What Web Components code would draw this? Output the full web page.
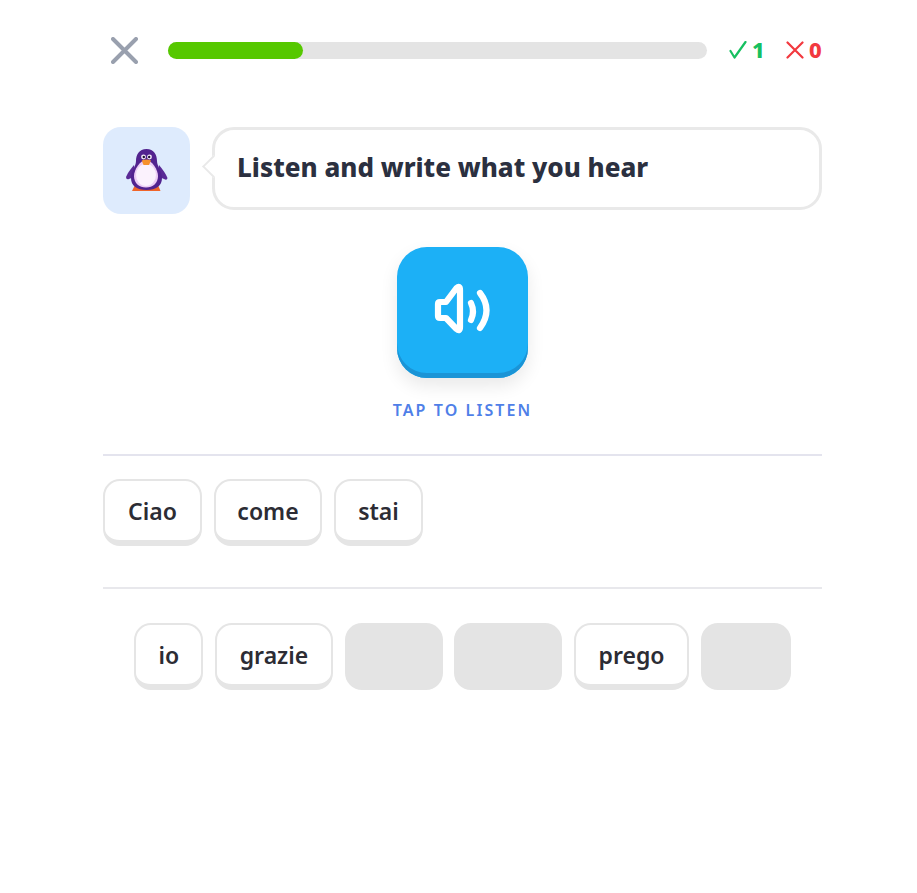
<!DOCTYPE html>
<html lang="en">
<head>
<meta charset="utf-8">
<title>Listen and write</title>
<style>
  html, body { margin: 0; background: #fff; }
  body { font-family: "Noto Sans", "Open Sans", sans-serif; color: #2b2f3a; }
</style>
</head>
<body>
<lesson-page>
  <lesson-header slot="header" progress="25" correct="1" wrong="0"></lesson-header>
  <lesson-prompt slot="prompt">Listen and write what you hear</lesson-prompt>
  <listen-button slot="listen">TAP TO LISTEN</listen-button>
  <answer-row slot="answer">
    <word-chip width="99">Ciao</word-chip>
    <word-chip width="108">come</word-chip>
    <word-chip width="89">stai</word-chip>
  </answer-row>
  <word-bank slot="bank">
    <word-chip width="69">io</word-chip>
    <word-chip width="118">grazie</word-chip>
    <word-chip width="98" used></word-chip>
    <word-chip width="108" used></word-chip>
    <word-chip width="115">prego</word-chip>
    <word-chip width="90" used></word-chip>
  </word-bank>
</lesson-page>

<script>
class LessonPage extends HTMLElement {
  constructor() {
    super();
    this.attachShadow({ mode: "open" });
    this.shadowRoot.innerHTML = `
<style>
:host { display: block; width: 719px; height: 856px; padding: 37px 95px 0 103px; }
.top { display: block; margin-bottom: 63px; }
.prompt { display: block; margin-bottom: 33px; }
.listen { display: block; margin-bottom: 34px; }
.answer { display: block; border-top: 2px solid #e4e4ee; border-bottom: 2px solid #e8e8ec; padding: 23px 0 41px; margin-bottom: 33px; }
</style>
<div class="top"><slot name="header"></slot></div>
<div class="prompt"><slot name="prompt"></slot></div>
<div class="listen"><slot name="listen"></slot></div>
<div class="answer"><slot name="answer"></slot></div>
<div class="bank"><slot name="bank"></slot></div>
`;
  }
}

class LessonHeader extends HTMLElement {
  constructor() {
    super();
    this.attachShadow({ mode: "open" });
    const progress = this.getAttribute("progress") || 0;
    this.shadowRoot.innerHTML = `
<style>
:host { display: flex; align-items: center; height: 27px; padding-left: 8px; }
.close { width: 27px; height: 27px; flex: none; margin-right: 30px; }
.bar { flex: none; width: 539px; height: 17px; background: #e4e4e4; border-radius: 9px; margin-right: 22px; }
.fill { height: 100%; width: ${progress}%; background: #56c800; border-radius: 9px; }
.score { display: flex; align-items: center; font-size: 22px; font-weight: 800; line-height: 27px; margin-top: -2px; }
.score svg { width: 18px; height: 18px; flex: none; margin-right: 5px; }
.ok { color: #16c060; width: 57px; }
.bad { color: #f2393f; }
</style>
<svg class="close" viewBox="0 0 27 27"><path d="M2 2 25 25M25 2 2 25" stroke="#99a0ae" stroke-width="4" stroke-linecap="round"/></svg>
<div class="bar"><div class="fill"></div></div>
<div class="score ok"><svg viewBox="0 0 18 18"><path d="M1.5 10 5.5 16.5 16.5 1" fill="none" stroke="#16c060" stroke-width="2.2" stroke-linecap="round" stroke-linejoin="round"/></svg><span>${this.getAttribute("correct")}</span></div>
<div class="score bad"><svg viewBox="0 0 18 18"><path d="M1.5 1.5 16.5 16.5M16.5 1.5 1.5 16.5" fill="none" stroke="#f2393f" stroke-width="2.2" stroke-linecap="round"/></svg><span>${this.getAttribute("wrong")}</span></div>
`;
  }
}

class LessonPrompt extends HTMLElement {
  constructor() {
    super();
    this.attachShadow({ mode: "open" });
    this.shadowRoot.innerHTML = `
<style>
:host { display: flex; align-items: flex-start; }
.avatar { width: 87px; height: 87px; flex: none; background: #deebfd; border-radius: 18px; display: flex; align-items: center; justify-content: center; margin-right: 22px; }
.avatar svg { width: 45px; height: 45px; }
.bubble { position: relative; flex: 1; box-sizing: border-box; height: 83px; border: 3px solid #e9e9e9; border-radius: 22px; background: #fff; display: flex; align-items: center; padding: 0 0 3px 22px; font-size: 26px; font-weight: 800; color: #2b3040; }
.bubble::before { content: ""; position: absolute; left: -10px; top: 28px; width: 15px; height: 15px; background: #fff; border-left: 2px solid #e9e9e9; border-bottom: 2px solid #e9e9e9; transform: rotate(45deg) scale(.95); }
</style>
<div class="avatar">
  <svg viewBox="0 0 45 45">
    <path d="M10 17 Q4 24 2 29 Q2 32 5 31 L12 28 Z" fill="#5a2a96"/>
    <path d="M35 17 Q41 24 43.5 30 Q43 33 40 31 L33 28 Z" fill="#5a2a96"/>
    <path d="M11 37 H34 L36.5 43 H8 Z" fill="#f0652a"/>
    <path d="M22.5 1 C15 1 12 7 12 13 C12 18 7 24 7 30 C7 38 13 42 22.5 42 C32 42 38 38 38 30 C38 24 33 18 33 13 C33 7 30 1 22.5 1Z" fill="#52238f"/>
    <path d="M22 12 C16 12 10 22 10 28 C10 35 15 39.5 22 39.5 C29 39.5 34 35 34 28 C34 22 28 12 22 12Z" fill="#eccdf5"/>
    <ellipse cx="22" cy="27" rx="10" ry="11" fill="#fbf2fd"/>
    <circle cx="19.5" cy="9" r="2.4" fill="#f7eefa"/>
    <circle cx="25.5" cy="9" r="2.4" fill="#f7eefa"/>
    <circle cx="19.8" cy="9" r="1.2" fill="#1d1030"/>
    <circle cx="25.2" cy="9" r="1.2" fill="#1d1030"/>
    <path d="M17.7 12.5 Q22.4 10.5 27 12.5 L25 17 H19.5 Z" fill="#f6912c"/>
  </svg>
</div>
<div class="bubble"><slot></slot></div>
`;
  }
}

class ListenButton extends HTMLElement {
  constructor() {
    super();
    this.attachShadow({ mode: "open" });
    this.shadowRoot.innerHTML = `
<style>
:host { display: flex; flex-direction: column; align-items: center; }
.btn { width: 131px; height: 131px; box-sizing: border-box; border-radius: 30px; background: #1cb0f6; box-shadow: inset 0 -5px 0 #1a94d6, 0 8px 18px rgba(0,0,0,.09); display: flex; align-items: center; justify-content: center; }
.btn svg { width: 60px; height: 56px; margin-top: -5px; }
.label { margin-top: 22px; font-size: 16px; line-height: 20px; font-weight: 600; letter-spacing: 2.1px; color: #4f7fe8; }
</style>
<div class="btn">
  <svg viewBox="0 0 60 56" fill="none" stroke="#fff" stroke-width="6.2" stroke-linecap="round" stroke-linejoin="round">
    <path d="M7 20 H13 L23.5 6 Q27 3 27 8 V45 Q27 50 23.5 47 L13 36 H7 Q5 36 5 34 V22 Q5 20 7 20 Z"/>
    <path d="M38 21 Q42 29.5 38 38"/>
    <path d="M47 11 Q60 28 47 46"/>
  </svg>
</div>
<div class="label"><slot></slot></div>
`;
  }
}

class AnswerRow extends HTMLElement {
  constructor() {
    super();
    this.attachShadow({ mode: "open" });
    this.shadowRoot.innerHTML = `
<style>:host { display: flex; gap: 12px; }</style>
<slot></slot>
`;
  }
}

class WordBank extends HTMLElement {
  constructor() {
    super();
    this.attachShadow({ mode: "open" });
    this.shadowRoot.innerHTML = `
<style>:host { display: flex; justify-content: center; gap: 11.7px; padding-top: 1px; }</style>
<slot></slot>
`;
  }
}

class WordChip extends HTMLElement {
  constructor() {
    super();
    this.attachShadow({ mode: "open" });
    const used = this.hasAttribute("used");
    const width = this.getAttribute("width");
    this.shadowRoot.innerHTML = `
<style>
:host { display: block; flex: none; width: ${width}px; }
.chip { box-sizing: border-box; height: 67px; border: 2.5px solid #e5e5e5; border-bottom-width: 6px; border-radius: 17px; background: #fff; display: flex; align-items: center; justify-content: center; font-size: 23px; font-weight: 600; color: #2c2c34; padding-bottom: 0; }
.chip.used { background: #e4e4e4; border: 0; }
</style>
<div class="chip ${used ? "used" : ""}"><slot></slot></div>
`;
  }
}

customElements.define("lesson-page", LessonPage);
customElements.define("lesson-header", LessonHeader);
customElements.define("lesson-prompt", LessonPrompt);
customElements.define("listen-button", ListenButton);
customElements.define("answer-row", AnswerRow);
customElements.define("word-bank", WordBank);
customElements.define("word-chip", WordChip);
</script>
</body>
</html>
